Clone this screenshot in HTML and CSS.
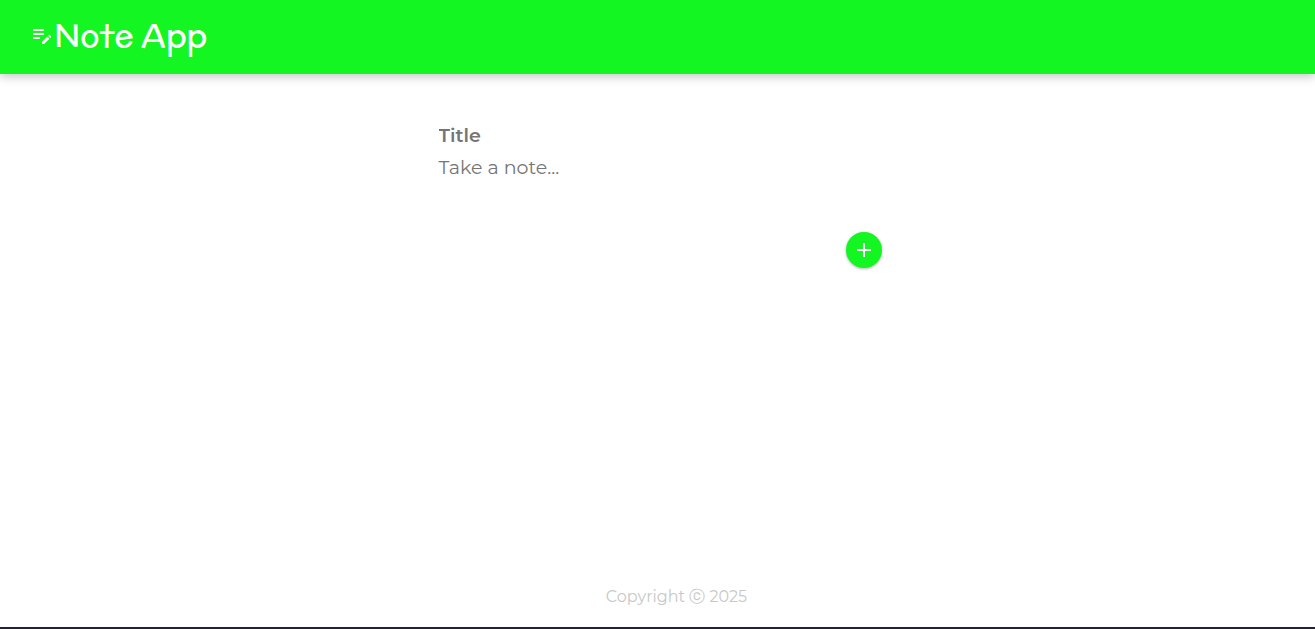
FILE: index.html
```html
<!DOCTYPE html>
<html lang="en">
<head>
<meta charset="utf-8">
<meta name="viewport" content="width=device-width, initial-scale=1">
<title>Note App</title>
<link rel="stylesheet" href="styles.css">
</head>
<body>
<header class="header">
  <svg class="logo" viewBox="0 0 24 24" aria-hidden="true"><path d="M3 10h11v2H3v-2zm0-2h11V6H3v2zm0 8h7v-2H3v2zm15.01-3.13.71-.71c.39-.39 1.02-.39 1.41 0l.71.71c.39.39.39 1.02 0 1.41l-.71.71-2.12-2.12zm-.71.71-5.3 5.3V21h2.12l5.3-5.3-2.12-2.12z"/></svg>
  <h1 class="brand">Note App</h1>
</header>
<main class="main">
  <form class="note-form">
    <input class="field field-title" name="title" placeholder="Title" aria-label="Title">
    <textarea class="field field-content" name="content" rows="3" placeholder="Take a note..." aria-label="Take a note"></textarea>
    <button class="add" type="button" aria-label="Add note">
      <svg class="add-icon" viewBox="0 0 24 24" aria-hidden="true"><path d="M19 13h-6v6h-2v-6H5v-2h6V5h2v6h6v2z"/></svg>
    </button>
  </form>
</main>
<footer class="footer"><p class="copyright">Copyright ⓒ 2025</p></footer>
</body>
</html>
```
FILE: styles.css
```css
* {
  box-sizing: border-box;
  margin: 0;
  padding: 0;
}

body {
  display: flex;
  flex-direction: column;
  min-height: 100vh;
  border-bottom: 2px solid #222233;
  background: #fff;
  font-family: Montserrat, "DejaVu Sans", sans-serif;
}

.header {
  display: flex;
  align-items: center;
  padding: 14px 30px 18px;
  background: #14f621;
  color: #fff;
  box-shadow: 0 2px 10px rgba(0, 0, 0, 0.25);
}

.logo {
  width: 24px;
  height: 24px;
  fill: currentColor;
}

.brand {
  font-family: McLaren, Lato, sans-serif;
  font-size: 32px;
  font-weight: 400;
  line-height: 42px;
}

.main {
  flex: 1;
  padding: 46px 16px;
}

.note-form {
  display: flex;
  flex-direction: column;
  width: 100%;
  max-width: 480px;
  margin: 0 auto;
  padding: 0 16px;
}

.field {
  width: 100%;
  padding: 4px 5px;
  border: 0;
  outline: 0;
  resize: none;
  background: transparent;
  color: #333;
  font-family: Montserrat, Inter, sans-serif;
  font-size: 19px;
  line-height: 24px;
}

.field::placeholder {
  color: #757575;
  opacity: 1;
}

.field-title {
  font-weight: 600;
}

.field-content {
  font-weight: 400;
}

.add {
  display: grid;
  place-items: center;
  align-self: flex-end;
  width: 36px;
  height: 36px;
  border: 0;
  border-radius: 50%;
  background: #14f621;
  color: #fff;
  box-shadow: 0 1px 3px rgba(0, 0, 0, 0.3);
  cursor: pointer;
}

.add-icon {
  width: 24px;
  height: 24px;
  fill: currentColor;
}

.footer {
  padding: 0 0 18px 38px;
  text-align: center;
}

.copyright {
  color: #c8c8c8;
  font-size: 16px;
  line-height: 24px;
}
```
